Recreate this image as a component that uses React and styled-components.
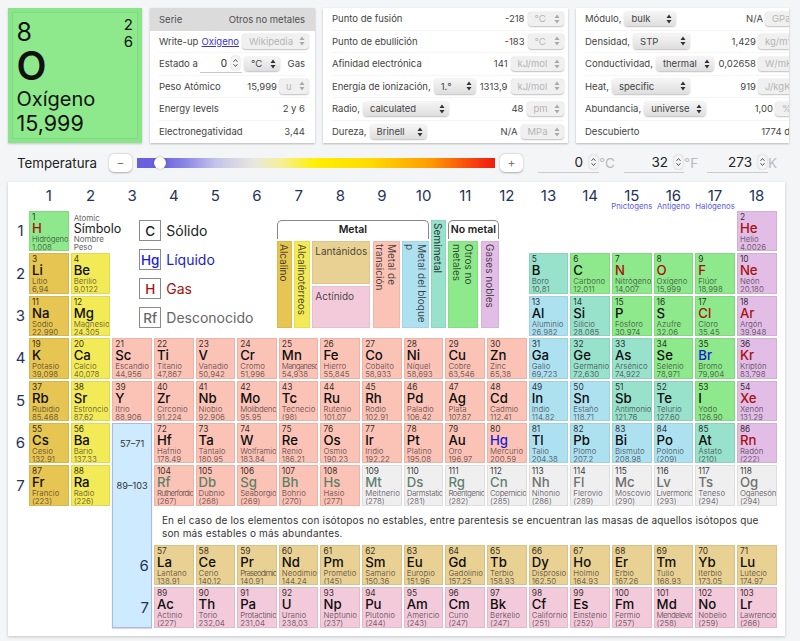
import React from "react";
import styled, { createGlobalStyle } from "styled-components";

const FONT = `Inter, "Liberation Sans", sans-serif`;
const CAT = {
  alk: "#e6c552", ae: "#f3ea58", tm: "#fbc3b5", nm: "#8ee98c", ng: "#e2bde6",
  sm: "#98e1ca", pt: "#aee1f0", la: "#e8d193", ac: "#f3cada", un: "#efefef",
};

const Global = createGlobalStyle`
  html, body { margin: 0; padding: 0; background: #f3f5f7; font-family: ${FONT}; width: 800px; height: 641px; overflow: hidden; }
`;

const Page = styled.div`
  padding: 8px 0 0 8px;
  width: 792px;
  box-sizing: border-box;
`;
const TopRow = styled.div`
  display: flex;
  gap: 8px;
  height: 135px;
`;
const BigCard = styled.div`
  width: 134px;
  height: 135px;
  box-sizing: border-box;
  background: #8ee98c;
  box-shadow: inset 0 0 0 4px #8ae588, inset 0 0 0 5px #7fdb7f, 0 1px 2px rgba(0,0,0,.2);
  padding: 9px 9px 0 8.5px;
  position: relative;
  color: #111;
`;
const BigNum = styled.div`
  font-size: 25px;
  line-height: 26px;
  margin-top: 2px;
`;
const BigSym = styled.div`
  font-size: 39px;
  line-height: 36px;
  font-weight: 600;
  margin-top: 3px;
`;
const BigName = styled.div`
  font-size: 20px;
  line-height: 24px;
  margin-top: 3px;
`;
const BigWeight = styled.div`
  font-size: 21.5px;
  line-height: 24px;
`;
const Shells = styled.div`
  position: absolute;
  top: 8px;
  right: 9px;
  font-size: 15px;
  line-height: 17px;
  text-align: right;
`;
const Panel = styled.div`
  width: ${p => p.$w}px;
  flex: none;
  background: #fff;
  box-shadow: 0 1px 2px rgba(0,0,0,.25);
  overflow: hidden;
`;
const Rows = styled.div`
  width: ${p => p.$w}px;
`;
const Row = styled.div`
  height: 22.5px;
  box-sizing: border-box;
  display: flex;
  align-items: center;
  margin: 0 ${p => p.$r ?? 10}px 0 9px;
  font-size: 9.5px;
  color: #444;
  white-space: nowrap;
  border-bottom: ${p => (p.$last ? "none" : "1px solid #f5f5f5")};
`;
const HeadRow = styled(Row)`
  margin: 0;
  padding: 0 10px 0 9px;
  background: #dbdbdb;
  border: none;
  color: #505050;
`;
const Label = styled.span`
  margin-right: 3px;
`;
const FixedLabel = styled.span`
  flex: none;
  width: ${p => p.$w}px;
`;
const Value = styled.span`
  margin-left: auto;
  padding-right: ${p => p.$pad ?? 0}px;
`;
const Select = styled.span`
  flex: none;
  display: inline-flex;
  align-items: center;
  justify-content: space-between;
  box-sizing: border-box;
  width: ${p => p.$w}px;
  height: 14.5px;
  padding: 0 4px 0 7px;
  border-radius: 4px;
  font-size: 9.5px;
  color: ${p => (p.$off ? "#b5b5b5" : "#444")};
  background: ${p => (p.$off ? "#f0f0f0" : "linear-gradient(#f5f5f5,#dedede)")};
  box-shadow: 0 0.5px 1.5px rgba(0,0,0,.25);
  overflow: hidden;
  svg { flex: none; }
`;
const Arrows = ({ off }) => (
  <svg width="6" height="10" viewBox="0 0 6 10">
    <path d="M3 .5 L5.5 4 H.5 Z M3 9.5 L5.5 6 H.5 Z" fill={off ? "#aaa" : "#333"} />
  </svg>
);
const Sel = ({ w, off, children }) => (
  <Select $w={w} $off={off}>
    <span>{children}</span>
    <Arrows off={off} />
  </Select>
);
const Link = styled.a`
  color: #3a32c8;
  text-decoration: underline;
  margin: 0 3px 0 auto;
`;
const NumField = styled.span`
  flex: none;
  display: inline-flex;
  align-items: center;
  justify-content: flex-end;
  box-sizing: border-box;
  width: 42px;
  height: 18px;
  margin-right: 2px;
  border-bottom: 1px solid #c8c8c8;
  font-size: 10px;
  color: #222;
  gap: 4px;
  padding-right: 2px;
`;
const StepBox = styled.span`
  display: inline-flex;
  align-items: center;
  justify-content: center;
  width: 9px;
  height: 14px;
  border-radius: 4px;
  background: #f4f4f4;
  box-shadow: 0 0 1.5px rgba(0,0,0,.3);
`;
const Stepper = () => (
  <StepBox>
    <svg width="7" height="10" viewBox="0 0 7 10">
      <path d="M1.5 3.8 L3.5 1.5 L5.5 3.8 M1.5 6.2 L3.5 8.5 L5.5 6.2" fill="none" stroke="#444" strokeWidth=".9" />
    </svg>
  </StepBox>
);

const TempRow = styled.div`
  height: 39px;
  display: flex;
  align-items: center;
  padding-left: 9px;
  color: #222;
`;
const TempLabel = styled.span`
  font-size: 13.3px;
  width: 92px;
  flex: none;
`;
const RoundBtn = styled.span`
  flex: none;
  width: 23px;
  height: 18px;
  background: #fff;
  border-radius: 5px;
  box-shadow: 0 0.5px 2px rgba(0,0,0,.3);
  display: flex;
  align-items: center;
  justify-content: center;
  font-size: 12px;
  color: #777;
`;
const Slider = styled.div`
  position: relative;
  flex: none;
  margin: 0 5px;
  width: 358px;
  height: 10px;
  background: linear-gradient(90deg,#6860dc 0%,#6a62dd 7%,#8f8ae4 14%,#c5c3ea 22%,#e9e8de 33%,#f4f09a 40%,#fff000 50%,#ffd800 66%,#ff9a00 82%,#f8400c 94%,#f01a10 100%);
`;
const Thumb = styled.span`
  position: absolute;
  left: 17px;
  top: -1px;
  width: 12px;
  height: 12px;
  border-radius: 50%;
  background: #fff;
  box-shadow: 0 0 2px rgba(0,0,0,.35);
`;
const TempGroup = styled.div`
  display: flex;
  align-items: center;
  margin-left: 15px;
  height: 20px;
`;
const Unit = styled.span`
  color: #b5bcc0;
  font-size: 13.5px;
  width: ${p => p.$w}px;
  flex: none;
  box-sizing: border-box;
`;
const TempField = styled.span`
  flex: none;
  box-sizing: border-box;
  display: flex;
  align-items: center;
  justify-content: flex-end;
  gap: 6px;
  width: ${p => p.$w}px;
  height: 20px;
  padding-right: 1px;
  border-bottom: 1px solid #ccc;
  font-size: 13.5px;
  color: #222;
`;

const Card = styled.div`
  width: 777px;
  height: 454px;
  box-sizing: border-box;
  background: #fff;
  box-shadow: 0 1px 3px rgba(0,0,0,.2);
`;
const Grid = styled.div`
  display: grid;
  grid-template-columns: 19px repeat(18, 39.65px);
  grid-template-rows: 27px repeat(7, 40.4px) 35.2px repeat(2, 40.4px);
  column-gap: 2px;
  row-gap: 2px;
`;
const Place = styled.div`
  grid-column: ${p => p.$c};
  grid-row: ${p => p.$r};
`;
const GroupHead = styled(Place)`
  display: flex;
  flex-direction: column;
  align-items: center;
  color: #24335c;
  font-size: 15px;
  line-height: 19px;
  padding-top: 4px;
`;
const Hint = styled.span`
  font-size: 7.8px;
  line-height: 8px;
  color: #5b5be0;
  white-space: nowrap;
  margin-top: -3px;
`;
const RowNum = styled(Place)`
  display: flex;
  align-items: center;
  justify-content: center;
  padding-left: 6px;
  color: #24335c;
  font-size: 15px;
  margin-top: -1px;
`;
const Cell = styled(Place)`
  box-sizing: border-box;
  background: ${p => CAT[p.$cat]};
  border: 1px solid rgba(0,0,0,.07);
  padding: 1px 0 0 2px;
  overflow: hidden;
  white-space: nowrap;
`;
const CellNum = styled.div`
  font-size: 8.4px;
  line-height: 9px;
  color: rgba(0,0,0,.8);
`;
const CellSym = styled.div`
  font-size: 13.2px;
  line-height: 13px;
  font-weight: 500;
  color: ${p => p.$c};
`;
const CellName = styled.div`
  font-size: 7.8px;
  line-height: 8px;
  letter-spacing: ${p => p.$ls ?? 0}px;
  color: rgba(30,20,30,.62);
`;

const KeyBox = styled(Place)`
  padding: 3px 0 0 3px;
  color: #666;
  white-space: nowrap;
  font-size: 8px;
  line-height: 8px;
`;
const KeySym = styled.div`
  font-size: 12.5px;
  line-height: 13px;
  color: #222;
`;
const States = styled(Place)`
  margin: 9px 0 0 27px;
  display: flex;
  flex-direction: column;
  gap: 8px;
`;
const StateRow = styled.div`
  display: flex;
  align-items: center;
  gap: 5px;
  height: 21px;
  font-size: 14px;
  color: ${p => p.$c};
  white-space: nowrap;
`;
const StateBox = styled.span`
  box-sizing: border-box;
  width: 22px;
  height: 21px;
  border: 1px solid #8b8b8b;
  display: flex;
  align-items: center;
  justify-content: center;
  font-size: 13.5px;
  font-weight: 500;
`;
const Legend = styled(Place)`
  margin: 9px 0 0 -2px;
  display: flex;
  gap: 2px;
  height: 108px;
`;
const LegendGroup = styled.div`
  width: ${p => p.$w}px;
  flex: none;
  display: flex;
  flex-direction: column;
`;
const Bracket = styled.div`
  height: 19px;
  box-sizing: border-box;
  border: 1px solid #888;
  border-bottom: none;
  border-radius: 5px 5px 0 0;
  text-align: center;
  font-size: 10.5px;
  font-weight: 600;
  line-height: 18px;
  color: #222;
  margin-bottom: 2px;
  white-space: nowrap;
`;
const LegendBody = styled.div`
  flex: 1;
  display: flex;
  gap: ${p => p.$gap}px;
`;
const VBar = styled.div`
  box-sizing: border-box;
  width: ${p => p.$w}px;
  flex: none;
  background: ${p => CAT[p.$cat]};
  border: 1px solid rgba(0,0,0,.05);
  writing-mode: vertical-rl;
  font-size: 10px;
  line-height: 12px;
  font-weight: ${p => (p.$bold ? 500 : 400)};
  color: rgba(20,20,20,.78);
  display: flex;
  align-items: center;
  justify-content: flex-start;
  padding-top: 2px;
  white-space: nowrap;
`;
const VText = styled.span`
  display: block;
`;
const Stack = styled.div`
  width: 58px;
  flex: none;
  display: flex;
  flex-direction: column;
  gap: 2px;
`;
const HBar = styled.div`
  flex: 1;
  box-sizing: border-box;
  background: ${p => CAT[p.$cat]};
  border: 1px solid rgba(0,0,0,.05);
  padding: 3px 0 0 2px;
  font-size: 10px;
  line-height: 12px;
  color: rgba(20,20,20,.78);
`;
const Note = styled(Place)`
  font-size: 10px;
  line-height: 13px;
  color: #333;
  letter-spacing: .18px;
  padding: 6px 10px 0 2px;
  margin-left: 6px;
`;
const Series = styled(Place)`
  box-sizing: border-box;
  background: #cdeaff;
  border: 1px solid #a8b8f2;
  box-shadow: 0 1px 1px rgba(0,0,0,.15);
  font-size: 9.2px;
  color: #333;
  text-align: center;
`;
const SeriesLabel = styled.div`
  height: 42.4px;
  line-height: 40px;
`;
const SeriesNum = styled(Place)`
  z-index: 1;
  display: flex;
  align-items: center;
  justify-content: flex-end;
  padding-right: 3px;
  font-size: 15px;
  color: #24335c;
`;

const raw = `H|Hidrógeno|1,008|nm
He|Helio|4,0026|ng
Li|Litio|6,94|alk
Be|Berilio|9,0122|ae
B|Boro|10,81|sm
C|Carbono|12,011|nm
N|Nitrógeno|14,007|nm
O|Oxígeno|15,999|nm
F|Flúor|18,998|nm
Ne|Neón|20,180|ng
Na|Sodio|22,990|alk
Mg|Magnesio|24,305|ae
Al|Aluminio|26,982|pt
Si|Silicio|28,085|sm
P|Fósforo|30,974|nm
S|Azufre|32,06|nm
Cl|Cloro|35,45|nm
Ar|Argón|39,948|ng
K|Potasio|39,098|alk
Ca|Calcio|40,078|ae
Sc|Escandio|44,956|tm
Ti|Titanio|47,867|tm
V|Vanadio|50,942|tm
Cr|Cromo|51,996|tm
Mn|Manganeso|54,938|tm
Fe|Hierro|55,845|tm
Co|Cobalto|58,933|tm
Ni|Níquel|58,693|tm
Cu|Cobre|63,546|tm
Zn|Zinc|65,38|tm
Ga|Galio|69,723|pt
Ge|Germanio|72,630|sm
As|Arsénico|74,922|sm
Se|Selenio|78,971|nm
Br|Bromo|79,904|nm
Kr|Kriptón|83,798|ng
Rb|Rubidio|85,468|alk
Sr|Estroncio|87,62|ae
Y|Itrio|88,906|tm
Zr|Circonio|91,224|tm
Nb|Niobio|92,906|tm
Mo|Molibdeno|95,95|tm
Tc|Tecnecio|(98)|tm
Ru|Rutenio|101,07|tm
Rh|Rodio|102,91|tm
Pd|Paladio|106,42|tm
Ag|Plata|107,87|tm
Cd|Cadmio|112,41|tm
In|Indio|114,82|pt
Sn|Estaño|118,71|pt
Sb|Antimonio|121,76|sm
Te|Telurio|127,60|sm
I|Yodo|126,90|nm
Xe|Xenón|131,29|ng
Cs|Cesio|132,91|alk
Ba|Bario|137,33|ae
La|Lantano|138,91|la
Ce|Cerio|140,12|la
Pr|Praseodimio|140,91|la
Nd|Neodimio|144,24|la
Pm|Prometio|(145)|la
Sm|Samario|150,36|la
Eu|Europio|151,96|la
Gd|Gadolinio|157,25|la
Tb|Terbio|158,93|la
Dy|Disprosio|162,50|la
Ho|Holmio|164,93|la
Er|Erbio|167,26|la
Tm|Tulio|168,93|la
Yb|Iterbio|173,05|la
Lu|Lutecio|174,97|la
Hf|Hafnio|178,49|tm
Ta|Tántalo|180,95|tm
W|Wolframio|183,84|tm
Re|Renio|186,21|tm
Os|Osmio|190,23|tm
Ir|Iridio|192,22|tm
Pt|Platino|195,08|tm
Au|Oro|196,97|tm
Hg|Mercurio|200,59|tm
Tl|Talio|204,38|pt
Pb|Plomo|207,2|pt
Bi|Bismuto|208,98|pt
Po|Polonio|(209)|pt
At|Ástato|(210)|sm
Rn|Radón|(222)|ng
Fr|Francio|(223)|alk
Ra|Radio|(226)|ae
Ac|Actinio|(227)|ac
Th|Torio|232,04|ac
Pa|Protactinio|231,04|ac
U|Uranio|238,03|ac
Np|Neptunio|(237)|ac
Pu|Plutonio|(244)|ac
Am|Americio|(243)|ac
Cm|Curio|(247)|ac
Bk|Berkelio|(247)|ac
Cf|Californio|(251)|ac
Es|Einstenio|(252)|ac
Fm|Fermio|(257)|ac
Md|Mendelevio|(258)|ac
No|Nobelio|(259)|ac
Lr|Lawrencio|(266)|ac
Rf|Rutherfordio|(267)|tm
Db|Dubnio|(268)|tm
Sg|Seaborgio|(269)|tm
Bh|Bohrio|(270)|tm
Hs|Hasio|(277)|tm
Mt|Meitnerio|(278)|un
Ds|Darmstatio|(281)|un
Rg|Roentgenio|(282)|un
Cn|Copernicio|(285)|un
Nh|Nihonio|(286)|un
Fl|Flerovio|(289)|un
Mc|Moscovio|(290)|un
Lv|Livermorio|(293)|un
Ts|Teneso|(294)|un
Og|Oganesón|(294)|un`.split("\n").map((l, i) => {
  const [s, n, w, c] = l.split("|");
  return { z: i + 1, s, n, w, c };
});

const GAS = new Set(["H", "He", "N", "O", "F", "Ne", "Cl", "Ar", "Kr", "Xe", "Rn"]);
const LIQ = new Set(["Br", "Hg"]);

const ctx = document.createElement("canvas").getContext("2d");
ctx.font = `7.8px Inter`;
const CELL_TEXT_WIDTH = 36.4;
const nameSpacing = n => {
  const over = ctx.measureText(n).width - CELL_TEXT_WIDTH;
  return over > 0 ? -(over / n.length).toFixed(3) : 0;
};

const symColor = e => {
  if (GAS.has(e.s)) return "#a80f0f";
  if (LIQ.has(e.s)) return "#1a1ad8";
  if (e.z >= 113) return "#707070";
  if (e.z >= 109) return "#5f8072";
  if (e.z >= 104) return "#5f8068";
  return "#0d0d0d";
};

const place = e => {
  const z = e.z;
  if (z === 1) return [1, 2];
  if (z === 2) return [18, 2];
  if (z <= 4) return [z - 2, 3];
  if (z <= 10) return [z + 8, 3];
  if (z <= 12) return [z - 10, 4];
  if (z <= 18) return [z, 4];
  if (z <= 36) return [z - 18, 5];
  if (z <= 54) return [z - 36, 6];
  if (z <= 56) return [z - 54, 7];
  if (z <= 71) return [z - 53, 10];
  if (z <= 86) return [z - 68, 7];
  if (z <= 88) return [z - 86, 8];
  if (z <= 103) return [z - 85, 11];
  return [z - 100, 8];
};

const Element = ({ e }) => {
  const [col, row] = place(e);
  return (
    <Cell $c={col + 1} $r={row} $cat={e.c}>
      <CellNum>{e.z}</CellNum>
      <CellSym $c={symColor(e)}>{e.s}</CellSym>
      <CellName $ls={nameSpacing(e.n)}>{e.n}</CellName>
      <CellName>{e.w}</CellName>
    </Cell>
  );
};

const P1 = () => (
  <Panel $w={165}>
    <HeadRow><span>Serie</span><Value>Otros no metales</Value></HeadRow>
    <Row $r={6}><Label>Write-up</Label><Link>Oxígeno</Link><Sel w={67} off>Wikipedia</Sel></Row>
    <Row><FixedLabel $w={41}>Estado a</FixedLabel><NumField>0<Stepper /></NumField><Sel w={36}>°C</Sel><Value>Gas</Value></Row>
    <Row $r={6}><Label>Peso Atómico</Label><Value $pad={2}>15,999</Value><Sel w={30} off>u</Sel></Row>
    <Row><Label>Energy levels</Label><Value>2 y 6</Value></Row>
    <Row $last><Label>Electronegatividad</Label><Value>3,44</Value></Row>
  </Panel>
);
const P2 = () => (
  <Panel $w={245}>
    <Row $r={4.5}><Label>Punto de fusión</Label><Value $pad={3}>-218</Value><Sel w={36} off>°C</Sel></Row>
    <Row $r={4.5}><Label>Punto de ebullición</Label><Value $pad={3}>-183</Value><Sel w={36} off>°C</Sel></Row>
    <Row $r={4.5}><Label>Afinidad electrónica</Label><Value $pad={3}>141</Value><Sel w={53} off>kJ/mol</Sel></Row>
    <Row $r={4.5}><Label>Energía de ionización,</Label><Sel w={42}>1.°</Sel><Value $pad={3}>1313,9</Value><Sel w={53} off>kJ/mol</Sel></Row>
    <Row $r={4.5}><Label>Radio,</Label><Sel w={86}>calculated</Sel><Value $pad={3}>48</Value><Sel w={37} off>pm</Sel></Row>
    <Row $r={4.5} $last><Label>Dureza,</Label><Sel w={57}>Brinell</Sel><Value $pad={3}>N/A</Value><Sel w={43} off>MPa</Sel></Row>
  </Panel>
);
const P3 = () => (
  <Panel $w={213}>
    <Rows $w={240}>
      <Row $r={8}><Label>Módulo,</Label><Sel w={52}>bulk</Sel><Value $pad={2}>N/A</Value><Sel w={43} off>GPa</Sel></Row>
      <Row $r={8}><Label>Densidad,</Label><Sel w={57}>STP</Sel><Value $pad={2}>1,429</Value><Sel w={50} off>kg/m³</Sel></Row>
      <Row $r={8}><Label>Conductividad,</Label><Sel w={58}>thermal</Sel><Value $pad={2}>0,02658</Value><Sel w={50} off>W/mK</Sel></Row>
      <Row $r={8}><Label>Heat,</Label><Sel w={78}>specific</Sel><Value $pad={2}>919</Value><Sel w={50} off>J/kgK</Sel></Row>
      <Row $r={8}><Label>Abundancia,</Label><Sel w={62}>universe</Sel><Value $pad={2}>1,00</Value><Sel w={33} off>%</Sel></Row>
      <Row $r={8} $last><Label>Descubierto</Label><Value $pad={6}>1774 d.C.</Value></Row>
    </Rows>
  </Panel>
);

const Temperature = () => (
  <TempRow>
    <TempLabel>Temperatura</TempLabel>
    <RoundBtn>−</RoundBtn>
    <Slider><Thumb /></Slider>
    <RoundBtn>+</RoundBtn>
    <TempGroup>
      <TempField $w={61}>0<Stepper /></TempField><Unit $w={25}>°C</Unit>
      <TempField $w={60}>32<Stepper /></TempField><Unit $w={23}>°F</Unit>
      <TempField $w={61}>273<Stepper /></TempField><Unit $w={17}>K</Unit>
    </TempGroup>
  </TempRow>
);

const HINTS = { 15: "Pnictogens", 16: "Antígeno", 17: "Halógenos" };

const Table = () => (
  <Card>
    <Grid>
      {Array.from({ length: 18 }, (_, i) => (
        <GroupHead key={i} $c={i + 2} $r={1}>
          {i + 1}
          {HINTS[i + 1] && <Hint>{HINTS[i + 1]}</Hint>}
        </GroupHead>
      ))}
      {[1, 2, 3, 4, 5, 6, 7].map(n => (
        <RowNum key={n} $c={1} $r={n + 1}>{n}</RowNum>
      ))}
      {raw.map(e => <Element key={e.z} e={e} />)}
      <KeyBox $c={3} $r={2}>
        <div>Atomic</div>
        <KeySym>Símbolo</KeySym>
        <div>Nombre</div>
        <div>Peso</div>
      </KeyBox>
      <States $c="4 / 8" $r="2 / 5">
        <StateRow $c="#222"><StateBox>C</StateBox>Sólido</StateRow>
        <StateRow $c="#1a1ad8"><StateBox>Hg</StateBox>Líquido</StateRow>
        <StateRow $c="#a80f0f"><StateBox>H</StateBox>Gas</StateRow>
        <StateRow $c="#666"><StateBox>Rf</StateBox>Desconocido</StateRow>
      </States>
      <Legend $c="8 / 14" $r="2 / 5">
        <LegendGroup $w={152}>
          <Bracket>Metal</Bracket>
          <LegendBody $gap={2.5}>
            <VBar $w={15} $cat="alk">Alcalino</VBar>
            <VBar $w={15.5} $cat="ae">Alcalinotérreos</VBar>
            <Stack>
              <HBar $cat="la">Lantánidos</HBar>
              <HBar $cat="ac">Actínido</HBar>
            </Stack>
            <VBar $w={27} $cat="tm"><VText>Metal de<br />transición</VText></VBar>
            <VBar $w={26.5} $cat="pt"><VText>Metal del bloque<br />p</VText></VBar>
          </LegendBody>
        </LegendGroup>
        <VBar $w={15} $cat="sm" $bold>Semimetal</VBar>
        <LegendGroup $w={51}>
          <Bracket>No metal</Bracket>
          <LegendBody $gap={3}>
            <VBar $w={30} $cat="nm"><VText>Otros no<br />metales</VText></VBar>
            <VBar $w={18} $cat="ng">Gases nobles</VBar>
          </LegendBody>
        </LegendGroup>
      </Legend>
      <Series $c={4} $r="7 / 12">
        <SeriesLabel>57–71</SeriesLabel>
        <SeriesLabel>89–103</SeriesLabel>
      </Series>
      <Note $c="5 / 20" $r={9}>
        En el caso de los elementos con isótopos no estables, entre parentesis se encuentran las masas de aquellos isótopos que son más estables o más abundantes.
      </Note>
      <SeriesNum $c={4} $r={10}>6</SeriesNum>
      <SeriesNum $c={4} $r={11}>7</SeriesNum>
    </Grid>
  </Card>
);

export default function App() {
  return (
    <Page>
      <Global />
      <TopRow>
        <BigCard>
          <BigNum>8</BigNum>
          <BigSym>O</BigSym>
          <BigName>Oxígeno</BigName>
          <BigWeight>15,999</BigWeight>
          <Shells>2<br />6</Shells>
        </BigCard>
        <P1 />
        <P2 />
        <P3 />
      </TopRow>
      <Temperature />
      <Table />
    </Page>
  );
}
